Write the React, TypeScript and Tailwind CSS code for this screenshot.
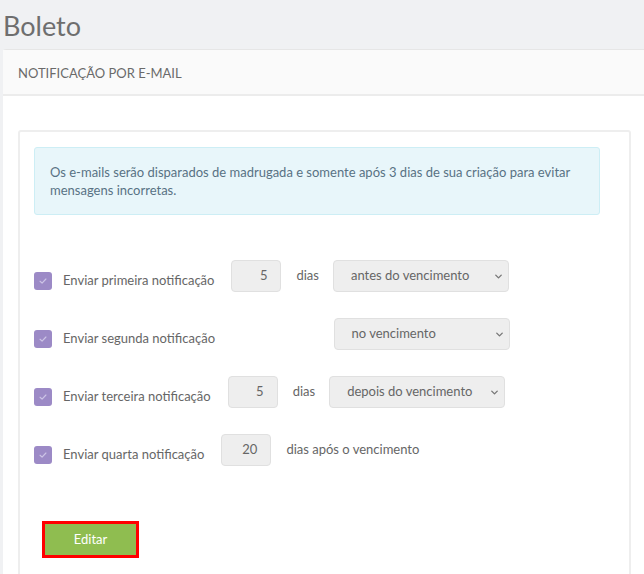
import { ChevronDown } from 'lucide-react'

interface NotificationRowProps {
  label: string
  days?: string
  showDays?: boolean
  option?: string
  suffix?: string
}

function Checkbox() {
  return (
    <span className="flex h-[18px] w-[18px] shrink-0 items-center justify-center rounded-[3px] bg-[#9c8ac6]">
      <svg viewBox="0 0 12 12" className="h-[10px] w-[10px]" fill="none">
        <path d="M2.5 6.3 L4.9 8.6 L9.5 3.6" stroke="#cdc4e6" strokeWidth="1.4" strokeLinecap="round" strokeLinejoin="round" />
      </svg>
    </span>
  )
}

function NotificationRow({ label, days = '', showDays = true, option, suffix }: NotificationRowProps) {
  return (
    <div className="flex h-[32px] items-center">
      <div className="mt-[9px] flex items-center gap-[11px]">
        <Checkbox />
        <span className="text-[13px] text-[#666]">{label}</span>
      </div>
      <div className={`ml-[17px] flex h-[32px] w-[50px] items-center justify-end rounded-[4px] border border-[#e0e0e0] bg-[#eeeeee] pr-[13px] text-[13px] text-[#666] ${showDays ? '' : 'invisible'}`}>
        {days || '5'}
      </div>
      <span className={`ml-[15px] text-[13px] text-[#666] ${showDays ? '' : 'invisible'}`}>
        {suffix || 'dias'}
      </span>
      {option && (
        <div className="ml-[14px] flex h-[32px] w-[176px] items-center justify-between rounded-[4px] border border-[#e0e0e0] bg-[#eeeeee] pl-[17px] pr-[4px] text-[13px] text-[#666]">
          <span>{option}</span>
          <ChevronDown className="h-[11px] w-[11px] text-[#777]" strokeWidth={3} />
        </div>
      )}
    </div>
  )
}

export default function App() {
  return (
    <div className="h-[574px] overflow-hidden bg-[#f0f1f3]" style={{ fontFamily: 'Lato, "Noto Sans", sans-serif' }}>
      <h1 className="h-[49px] pl-[3px] pt-[1px] text-[27px] leading-[49px] text-[#6e6e6e]">Boleto</h1>

      <div className="ml-[3px] w-[645px] rounded-tl-[3px] border-t border-[#e6e6e6] bg-white">
        <div className="flex h-[46px] items-center border-b-2 border-[#ececec] bg-[#fafafa] px-[15px] pt-[3px] text-[13px] text-[#6a6a6a]">
          NOTIFICAÇÃO POR E-MAIL
        </div>

        <div className="px-[15px] pt-[34px]">
          <div className="w-[613px] rounded-[3px] border-2 border-[#eeeeee] px-[14px] pt-[15px] pb-[40px]">
            <div className="w-[566px] rounded-[3px] border border-[#cdeef5] bg-[#e8f6fa] px-[15px] py-[15px] text-[13px] leading-[18px] text-[#587284]">
              Os e-mails serão disparados de madrugada e somente após 3 dias de sua criação para evitar
              mensagens incorretas.
            </div>

            <div className="mt-[45px] flex flex-col gap-[26px]">
              <NotificationRow label="Enviar primeira notificação" days="5" option="antes do vencimento" />
              <NotificationRow label="Enviar segunda notificação" showDays={false} option="no vencimento" />
              <NotificationRow label="Enviar terceira notificação" days="5" option="depois do vencimento" />
              <NotificationRow label="Enviar quarta notificação" days="20" suffix="dias após o vencimento" />
            </div>

            <div className="mt-[55px] ml-[8px]">
              <button className="h-[37px] w-[97px] border-[3px] border-[#ff0000] bg-[#8fbd50] pt-[1px] text-[13px] text-white">
                Editar
              </button>
            </div>
          </div>
        </div>
      </div>
    </div>
  )
}
